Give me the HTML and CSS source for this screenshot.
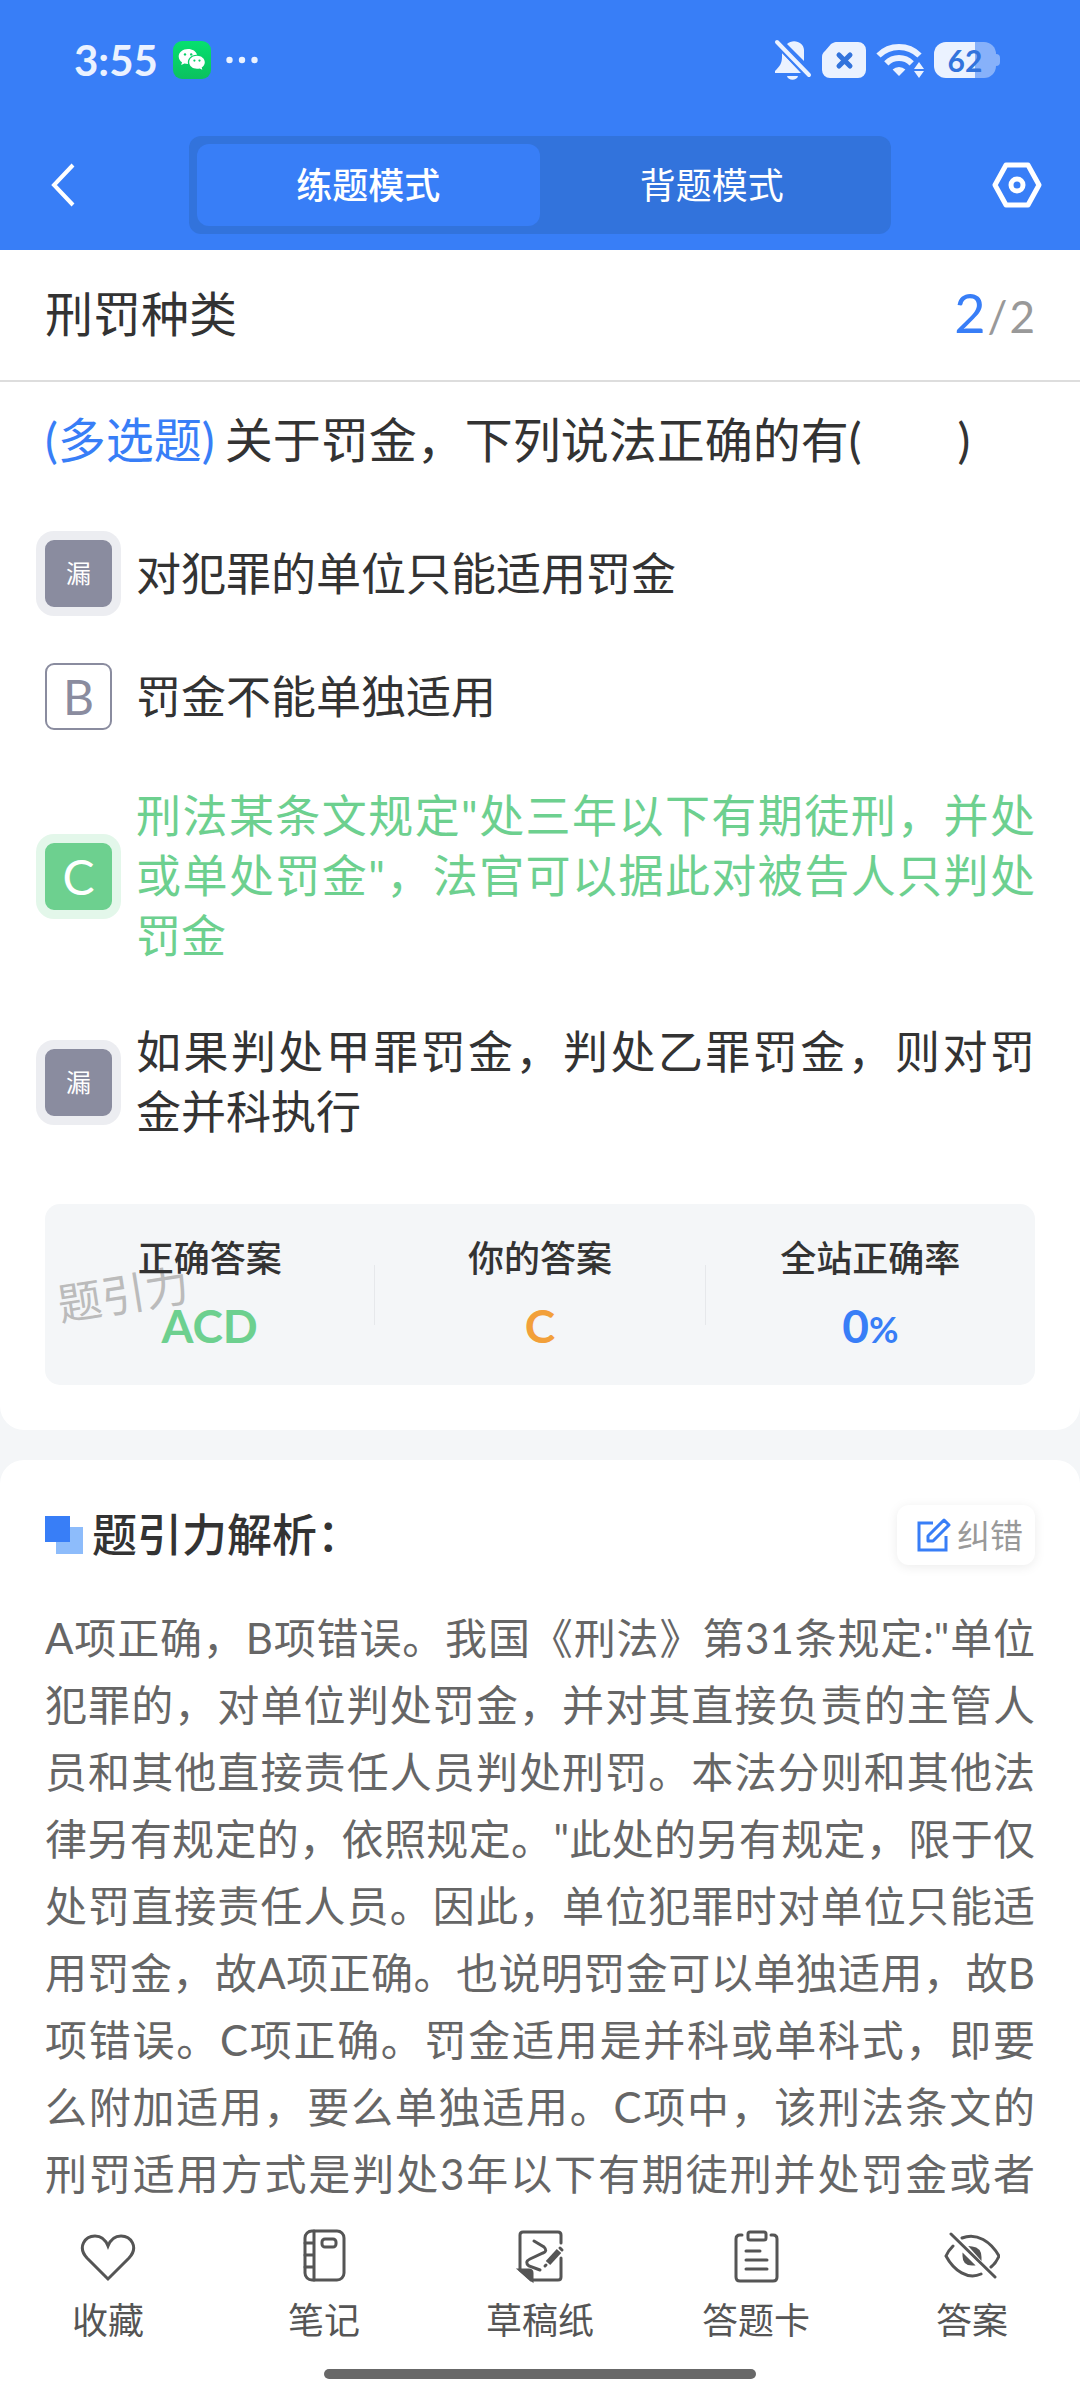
FILE: index.html
```html
<!DOCTYPE html>
<html lang="zh-CN">
<head>
    <meta charset="UTF-8">
    <meta name="viewport" content="width=device-width, initial-scale=1.0">
    <title>刑罚种类 - 题引力</title>
    <link rel="stylesheet" href="styles.css">
</head>
<body>
    <header class="header">
        <div class="status-bar">
            <div class="status-left">
                <span class="clock">3:55</span>
                <svg class="wechat" viewBox="0 0 38 38">
                    <defs>
                        <linearGradient id="wechatGreen" x1="0" y1="0" x2="0" y2="1">
                            <stop offset="0" stop-color="#06e06f"/>
                            <stop offset="1" stop-color="#0bc15f"/>
                        </linearGradient>
                    </defs>
                    <rect width="38" height="38" rx="9" fill="url(#wechatGreen)"/>
                    <path fill="#fff" d="M15 8c-5.200 0-9.300 3.300-9.300 7.500 0 2.400 1.300 4.400 3.300 5.800l-.8 2.800 3.200-1.600c1.100.3 2.300.5 3.600.5-1-5.200 3.300-9.400 9-9.200C23.200 10.400 19.500 8 15 8z"/>
                    <path fill="#fff" d="M24 14.800c-4.500 0-7.800 2.900-7.800 6.500s3.300 6.500 7.800 6.500c1 0 2-.1 2.800-.4l2.500 1.400-.6-2.300c1.900-1.200 3.100-3.100 3.100-5.200 0-3.600-3.400-6.500-7.800-6.500z"/>
                    <g fill="#08cf67"><circle cx="12" cy="13.400" r="1.200"/><circle cx="18.200" cy="13.400" r="1.200"/><circle cx="21.400" cy="19.600" r="1.100"/><circle cx="26.500" cy="19.600" r="1.100"/></g>
                </svg>
                <svg class="dots" viewBox="0 0 32 8" fill="#ebf2ff"><circle cx="3.500" cy="4" r="3.200"/><circle cx="16" cy="4" r="3.200"/><circle cx="28.500" cy="4" r="3.200"/></svg>
            </div>
            <div class="status-right">
                <svg width="38" height="42" viewBox="0 0 38 42" fill="#ebf2ff">
                    <path d="M8 14v4c0 6-2 9-7 14v2h26zM13 5c7-6 17-1 17 6v11z"/>
                    <path d="M13 37h11c-1 5-10 5-11 0z"/>
                    <path d="M3 3 35 36" stroke="#387ef7" stroke-width="8"/>
                    <path d="M3 3 35 36" stroke="#ebf2ff" stroke-width="4" stroke-linecap="round"/>
                </svg>
                <svg width="44" height="36" viewBox="0 0 44 36">
                    <path fill="#ebf2ff" d="M14 0h22a8 8 0 0 1 8 8v20a8 8 0 0 1-8 8H8a8 8 0 0 1-8-8V15c0-3 1-4 3-6l6-7c2-1 3-2 5-2z"/>
                    <path d="m17 13 11 11m0-11L17 24" stroke="#3273dc" stroke-width="5" stroke-linecap="round"/>
                </svg>
                <svg width="48" height="36" viewBox="0 0 48 36" fill="none" stroke="#ebf2ff" stroke-width="6">
                    <path d="M2.500 13.500a29 29 0 0 1 41 0M10.300 21.300a18 18 0 0 1 25.400 0"/>
                    <path d="M16.600 27.600a9 9 0 0 1 12.800 0L23 34z" fill="#ebf2ff" stroke="none"/>
                    <path d="m38 27 5-7 5 7zm0 2 5 7 5-7z" fill="#ebf2ff" stroke="none"/>
                </svg>
                <div class="battery"><span class="battery-level">62</span></div>
            </div>
        </div>
        <nav class="nav">
            <button class="icon-button" type="button" aria-label="返回">
                <svg width="24" height="44" viewBox="0 0 24 44" fill="none" stroke="#fff" stroke-width="4"><path d="M22 2 3 22l19 20"/></svg>
            </button>
            <div class="modes">
                <button class="mode active" type="button">练题模式</button>
                <button class="mode" type="button">背题模式</button>
            </div>
            <button class="icon-button" type="button" aria-label="设置">
                <svg width="50" height="46" viewBox="0 0 50 46" fill="none" stroke="#fff" stroke-width="5" stroke-linejoin="round"><path d="M14 3h22l11 20-11 20H14L3 23z"/><circle cx="25" cy="23" r="6"/></svg>
            </button>
        </nav>
    </header>

    <main class="content">
        <section class="card question-card">
            <div class="chapter">
                <h1>刑罚种类</h1>
                <div class="progress"><span class="current">2</span><span>/</span><span>2</span></div>
            </div>
            <p class="question"><span class="type">(多选题)</span>关于罚金，下列说法正确的有(　　)</p>
            <div class="options">
                <button class="option missed" type="button"><span class="mark">漏</span><span class="option-text">对犯罪的单位只能适用罚金</span></button>
                <button class="option" type="button"><span class="mark">B</span><span class="option-text">罚金不能单独适用</span></button>
                <button class="option correct" type="button"><span class="mark">C</span><span class="option-text">刑法某条文规定"处三年以下有期徒刑，并处或单处罚金"，法官可以据此对被告人只判处罚金</span></button>
                <button class="option missed" type="button"><span class="mark">漏</span><span class="option-text">如果判处甲罪罚金，判处乙罪罚金，则对罚金并科执行</span></button>
            </div>
            <div class="stats">
                <span class="watermark">题引力</span>
                <div class="stat"><span class="stat-label">正确答案</span><span class="stat-value green">ACD</span></div>
                <div class="stat"><span class="stat-label">你的答案</span><span class="stat-value orange">C</span></div>
                <div class="stat"><span class="stat-label">全站正确率</span><span class="stat-value blue">0<small>%</small></span></div>
            </div>
        </section>

        <section class="card analysis-card">
            <div class="analysis-header">
                <svg width="38" height="38" viewBox="0 0 38 38"><path fill="#8dbcfb" d="M11 11h27v27H11z"/><path fill="#387ef7" d="M0 0h25v26H0z"/></svg>
                <h2>题引力解析：</h2>
                <button class="report" type="button">
                    <svg width="34" height="34" viewBox="0 0 34 34" fill="none" stroke="#387ef7" stroke-width="3"><path d="M16 5H2v27h27V18"/><path d="m11 18 16-16 5 5-16 16h-5z" stroke-linejoin="round"/></svg>
                    纠错
                </button>
            </div>
            <p class="analysis">A项正确，B项错误。我国《刑法》第31条规定:"单位犯罪的，对单位判处罚金，并对其直接负责的主管人员和其他直接责任人员判处刑罚。本法分则和其他法律另有规定的，依照规定。"此处的另有规定，限于仅处罚直接责任人员。因此，单位犯罪时对单位只能适用罚金，故A项正确。也说明罚金可以单独适用，故B项错误。C项正确。罚金适用是并科或单科式，即要么附加适用，要么单独适用。C项中，该刑法条文的刑罚适用方式是判处3年以下有期徒刑并处罚金或者</p>
        </section>
    </main>

    <footer class="tab-bar">
        <div class="tabs">
            <button class="tab" type="button">
                <svg viewBox="0 0 56 56"><path d="M28 51 7 30C-3 19 5 8 15 8c7 0 11 5 13 10 2-5 6-10 13-10 10 0 18 11 8 22z"/></svg>
                收藏
            </button>
            <button class="tab" type="button">
                <svg viewBox="0 0 56 56"><rect x="9" y="3" width="39" height="49" rx="7"/><path d="M18 3v49M9 15h9M9 27h9M9 39h9"/><rect x="26" y="11" width="14" height="8" rx="3"/></svg>
                笔记
            </button>
            <button class="tab" type="button">
                <svg viewBox="0 0 56 56"><path d="M49 15V7q0-3-3-3H11q-3 0-3 3v35l11 10h27q3 0 3-3V30"/><path d="M8 42h9q3 0 3 3v7z" fill="#555"/><path d="m22 13 10 6q4 4-1 6l-13 6q-6 3-1 7l11 4"/><path d="m36 35 11-12" stroke-width="6" stroke-linecap="butt"/><path d="m48 20 2 2M33 38l1-1"/></svg>
                草稿纸
            </button>
            <button class="tab" type="button">
                <svg viewBox="0 0 56 56"><path d="M14 7h-2q-4 0-4 4v38q0 4 4 4h33q4 0 4-4V11q0-4-4-4h-2M18 23h14M18 32h21M18 41h21"/><rect x="20" y="4" width="18" height="8" rx="2"/></svg>
                答题卡
            </button>
            <button class="tab" type="button">
                <svg viewBox="0 0 56 56"><path d="M18 10c15-6 29 4 37 18q-3 7-8 11M9 18q-5 5-7 10c8 15 22 24 35 18M7 6l44 43"/><path d="M28 20q8 1 8 9zM20 28q0 8 8 8z" fill="#555"/></svg>
                答案
            </button>
        </div>
        <div class="home-indicator"></div>
    </footer>
</body>
</html>
```

FILE: styles.css
```css
:root {
    --blue: #387ef7;
    --green: #6dd08f;
    --orange: #f2a03a;
    --slate: #8a8c9f;
    --page-bg: #f4f6f8;
    --text: #333;
}

* {
    margin: 0;
    padding: 0;
    box-sizing: border-box;
}

body {
    height: 100vh;
    display: flex;
    flex-direction: column;
    background: var(--page-bg);
    color: var(--text);
    font-family: Lato, "Noto Sans CJK SC", sans-serif;
    text-spacing-trim: space-all;
}

button {
    border: none;
    background: none;
    color: inherit;
    font: inherit;
    cursor: pointer;
}

svg {
    flex: none;
}

/* 顶部 */
.header {
    background: var(--blue);
    color: #fff;
}

.status-bar {
    height: 120px;
    padding: 0 80px 0 74px;
    display: flex;
    align-items: center;
    justify-content: space-between;
}

.status-left,
.status-right {
    display: flex;
    align-items: center;
}

.status-left {
    gap: 15px;
}

.status-right {
    gap: 10px;
}

.clock {
    color: #ebf2ff;
    font-size: 42px;
    font-weight: 700;
}

.wechat {
    width: 38px;
    height: 38px;
}

.dots {
    width: 32px;
    height: 8px;
}

.battery {
    position: relative;
    width: 62px;
    height: 36px;
    margin-right: 4px;
    border-radius: 12px;
    background: linear-gradient(90deg, #ebf2ff 66%, #87b1fa 66%);
    text-align: center;
}

.battery::after {
    content: "";
    position: absolute;
    top: 12px;
    left: 100%;
    width: 4px;
    height: 12px;
    border-radius: 0 4px 4px 0;
    background: #87b1fa;
}

.battery-level {
    color: #3273dc;
    font-size: 30px;
    font-weight: 700;
    line-height: 36px;
}

.nav {
    height: 130px;
    padding: 16px 38px;
    display: flex;
    align-items: flex-start;
    justify-content: space-between;
}

.icon-button {
    width: 50px;
    height: 98px;
    display: flex;
    align-items: center;
    justify-content: center;
}

.modes {
    width: 70%;
    height: 98px;
    padding: 8px;
    display: flex;
    border-radius: 12px;
    background: #3273dc;
}

.mode {
    flex: 1;
    border-radius: 12px;
    font-size: 36px;
    line-height: 80px;
}

.mode.active {
    background: var(--blue);
    font-weight: 500;
}

/* 题目 */
.content {
    flex: 1;
    min-height: 0;
    overflow: hidden;
    display: flex;
    flex-direction: column;
    gap: 30px;
}

.card {
    background: #fff;
}

.question-card {
    padding-bottom: 45px;
    border-radius: 0 0 24px 24px;
}

.chapter {
    padding: 29px 45px 31px;
    display: flex;
    align-items: center;
    justify-content: space-between;
    border-bottom: 2px solid #ddd;
}

.chapter h1 {
    font-size: 48px;
    font-weight: 400;
    line-height: 70px;
}

.progress {
    display: flex;
    align-items: baseline;
    gap: 2px;
    color: #999;
    font-size: 44px;
    line-height: 60px;
}

.progress .current {
    color: var(--blue);
    font-size: 54px;
}

.question {
    padding: 24px 45px;
    font-size: 48px;
    line-height: 68px;
}

.question .type {
    margin-right: 10px;
    color: var(--blue);
}

.options {
    padding: 42px 45px 0;
    display: flex;
    flex-direction: column;
    gap: 56px;
}

.option {
    display: flex;
    align-items: center;
    gap: 24px;
    text-align: left;
}

.mark {
    width: 67px;
    height: 67px;
    flex: none;
    border: 2px solid var(--slate);
    border-radius: 9px;
    color: var(--slate);
    font-size: 48px;
    line-height: 63px;
    text-align: center;
}

.option-text {
    flex: 1;
    font-size: 45px;
    line-height: 60px;
    text-align: justify;
}

.missed .mark {
    background: var(--slate);
    box-shadow: 0 0 0 9px #ecedf1;
    color: #fff;
    font-size: 25px;
}

.correct .mark {
    border-color: var(--green);
    background: var(--green);
    box-shadow: 0 0 0 9px #e3f7ea;
    color: #fff;
}

.correct .option-text {
    color: var(--green);
}

/* 答案统计 */
.stats {
    position: relative;
    height: 181px;
    margin: 62px 45px 0;
    display: flex;
    align-items: center;
    border-radius: 15px;
    background: var(--page-bg);
}

.stat {
    position: relative;
    flex: 1;
    height: 60px;
    padding-bottom: 6px;
    display: flex;
    flex-direction: column;
    align-items: center;
    justify-content: center;
}

.stat + .stat {
    border-left: 1px solid #e6e8eb;
}

.stat-label {
    font-size: 36px;
    font-weight: 500;
    line-height: 68px;
}

.stat-value {
    font-size: 46px;
    font-weight: 700;
    line-height: 68px;
}

.stat-value small {
    font-size: 36px;
    line-height: 1;
}

.green {
    color: var(--green);
}

.orange {
    color: var(--orange);
}

.blue {
    color: var(--blue);
}

.watermark {
    position: absolute;
    top: 58px;
    left: 12px;
    color: #bbb;
    font-size: 44px;
    line-height: 64px;
    transform: rotate(-9deg);
}

/* 解析 */
.analysis-card {
    flex: 1;
    padding: 45px 45px 0;
    border-radius: 24px 24px 0 0;
}

.analysis-header {
    display: flex;
    align-items: center;
    gap: 9px;
}

.analysis-header h2 {
    flex: 1;
    font-size: 45px;
    font-weight: 500;
    line-height: 60px;
}

.report {
    height: 60px;
    padding: 0 12px 0 20px;
    display: flex;
    align-items: center;
    gap: 6px;
    border-radius: 12px;
    box-shadow: 0 2px 12px rgba(0, 0, 0, 0.08);
    color: #999;
    font-size: 33px;
    line-height: 60px;
}

/* 行尾后还有正文，末行同样两端对齐 */
.analysis {
    margin-top: 40px;
    color: #666;
    font-size: 42px;
    line-height: 67px;
    text-align: justify;
    text-align-last: justify;
}

/* 底部 */
.tab-bar {
    padding: 18px 0 21px;
    background: #fff;
}

.tabs {
    display: flex;
}

.tab {
    flex: 1;
    display: flex;
    flex-direction: column;
    align-items: center;
    gap: 10px;
    color: #555;
    font-size: 36px;
    line-height: 52px;
}

.tab svg {
    width: 56px;
    height: 56px;
    fill: none;
    stroke: #555;
    stroke-width: 3;
    stroke-linecap: round;
}

.home-indicator {
    width: 40%;
    height: 10px;
    margin: 23px auto 0;
    border-radius: 5px;
    background: #686868;
}
```
